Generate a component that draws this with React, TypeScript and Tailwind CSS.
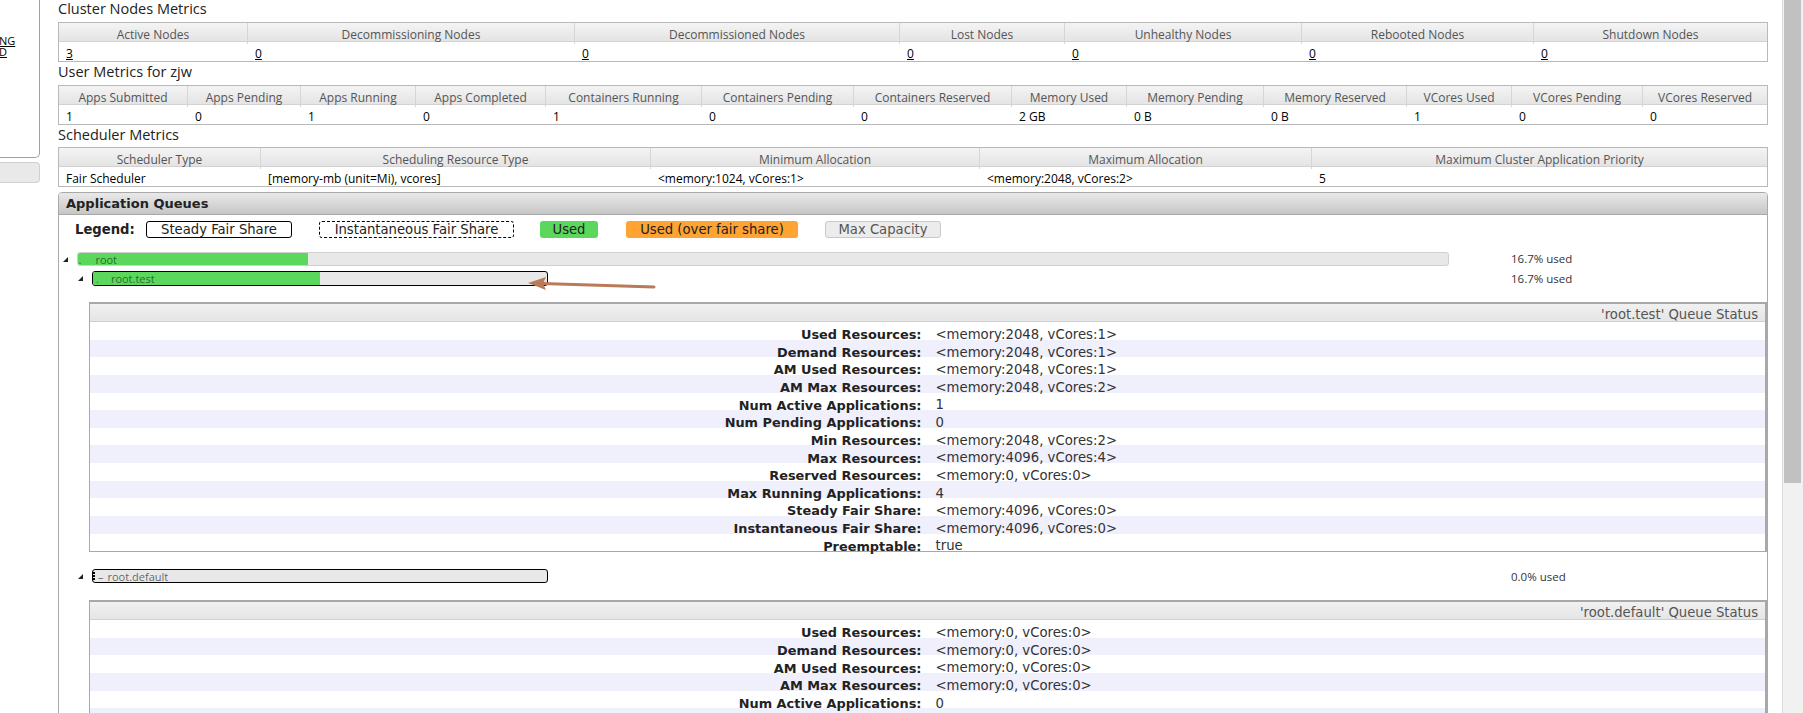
import React from "react";

const seg = "font-['Open_Sans','Noto_Sans',sans-serif]";
const dv = "font-['DejaVu_Sans','Verdana',sans-serif]";

type MetricProps = {
  grid: string;
  headers: string[];
  values: string[];
  underline?: boolean;
};

function MetricTable({ grid, headers, values, underline }: MetricProps) {
  return (
    <div className={`w-[1710px] border border-[#b9b9b9] ${seg}`}>
      <div className={`grid ${grid} h-[19px] bg-linear-to-b from-[#f4f4f4] to-[#e4e4e4] border-b border-[#d2d2d2]`}>
        {headers.map((h, i) => (
          <div
            key={i}
            className="flex items-center justify-center pt-[3px] text-[12px] text-[#555] border-r border-[#d6d6d6] last:border-r-0 whitespace-nowrap"
          >
            {h}
          </div>
        ))}
      </div>
      <div className={`grid ${grid} h-[19px] bg-white`}>
        {values.map((v, i) => (
          <div key={i} className="flex items-center pt-[3px] pl-[7px] text-[12px] text-black whitespace-nowrap">
            <span className={underline ? "underline" : ""}>{v}</span>
          </div>
        ))}
      </div>
    </div>
  );
}

function Title({ children, mt }: { children: React.ReactNode; mt: string }) {
  return (
    <div className={`${mt} h-[18px] flex items-center text-[14.5px] text-[#222] ${seg} whitespace-nowrap`}>
      {children}
    </div>
  );
}

function Tri() {
  return (
    <svg width="5" height="5" viewBox="0 0 5 5" className="shrink-0">
      <polygon points="5,0 5,5 0,5" fill="#222" />
    </svg>
  );
}

function StatusTable({ title, rows }: { title: string; rows: [string, string][] }) {
  return (
    <div className={`ml-[30px] border border-[#a8a8a8] border-t-2 border-r-2 ${dv}`}>
      <div className="h-[18px] flex items-center justify-end pt-[5px] pr-[7px] bg-linear-to-b from-[#f1f1f1] to-[#e5e5e5] border-b border-[#cfcfcf] text-[13.2px] text-[#555] whitespace-nowrap">
        {title}
      </div>
      {rows.map(([k, v], i) => (
        <div
          key={i}
          className={`flex items-center pt-[8px] h-[17.64px] ${i % 2 === 1 ? "bg-[#f0f0fc]" : "bg-white"}`}
        >
          <div className="w-1/2 text-right pr-[6px] text-[12.9px] font-bold text-[#222] whitespace-nowrap">{k}</div>
          <div className="pl-[8px] text-[13.25px] text-[#333] whitespace-nowrap">{v}</div>
        </div>
      ))}
    </div>
  );
}

const testRows: [string, string][] = [
  ["Used Resources:", "<memory:2048, vCores:1>"],
  ["Demand Resources:", "<memory:2048, vCores:1>"],
  ["AM Used Resources:", "<memory:2048, vCores:1>"],
  ["AM Max Resources:", "<memory:2048, vCores:2>"],
  ["Num Active Applications:", "1"],
  ["Num Pending Applications:", "0"],
  ["Min Resources:", "<memory:2048, vCores:2>"],
  ["Max Resources:", "<memory:4096, vCores:4>"],
  ["Reserved Resources:", "<memory:0, vCores:0>"],
  ["Max Running Applications:", "4"],
  ["Steady Fair Share:", "<memory:4096, vCores:0>"],
  ["Instantaneous Fair Share:", "<memory:4096, vCores:0>"],
  ["Preemptable:", "true"],
];

const defaultRows: [string, string][] = [
  ["Used Resources:", "<memory:0, vCores:0>"],
  ["Demand Resources:", "<memory:0, vCores:0>"],
  ["AM Used Resources:", "<memory:0, vCores:0>"],
  ["AM Max Resources:", "<memory:0, vCores:0>"],
  ["Num Active Applications:", "0"],
  ["Num Pending Applications:", "0"],
];

export default function App() {
  return (
    <div className="relative w-[1803px] h-[713px] overflow-hidden bg-white flex">
      {/* Left sidebar (partially scrolled out) */}
      <aside className={`w-[40px] shrink-0 ${seg}`}>
        <div className="h-[158px] border-r border-b border-[#a0a0a0] rounded-br-[5px] pt-[36px] text-[11px] leading-[10.5px] text-black">
          <div className="underline -ml-[1px]">NG</div>
          <div className="underline -ml-[1px]">D</div>
        </div>
        <div className="mt-[4px] h-[21px] bg-[#e9e9e9] border border-l-0 border-[#d0d0d0] rounded-r-[4px]" />
      </aside>

      {/* Main content */}
      <main className="ml-[18px] w-[1710px] shrink-0">
        <Title mt="mt-0">Cluster Nodes Metrics</Title>
        <div className="mt-[4px]">
          <MetricTable
            grid="grid-cols-[189px_327px_325px_165px_237px_232px_233px]"
            headers={[
              "Active Nodes",
              "Decommissioning Nodes",
              "Decommissioned Nodes",
              "Lost Nodes",
              "Unhealthy Nodes",
              "Rebooted Nodes",
              "Shutdown Nodes",
            ]}
            values={["3", "0", "0", "0", "0", "0", "0"]}
            underline
          />
        </div>

        <Title mt="mt-[1px]">User Metrics for zjw</Title>
        <div className="mt-[4px]">
          <MetricTable
            grid="grid-cols-[129px_113px_115px_130px_156px_152px_158px_115px_137px_143px_105px_131px_124px]"
            headers={[
              "Apps Submitted",
              "Apps Pending",
              "Apps Running",
              "Apps Completed",
              "Containers Running",
              "Containers Pending",
              "Containers Reserved",
              "Memory Used",
              "Memory Pending",
              "Memory Reserved",
              "VCores Used",
              "VCores Pending",
              "VCores Reserved",
            ]}
            values={["1", "0", "1", "0", "1", "0", "0", "2 GB", "0 B", "0 B", "1", "0", "0"]}
          />
        </div>

        <Title mt="mt-[1px]">Scheduler Metrics</Title>
        <div className="mt-[3px]">
          <MetricTable
            grid="grid-cols-[202px_390px_329px_332px_455px]"
            headers={[
              "Scheduler Type",
              "Scheduling Resource Type",
              "Minimum Allocation",
              "Maximum Allocation",
              "Maximum Cluster Application Priority",
            ]}
            values={[
              "Fair Scheduler",
              "[memory-mb (unit=Mi), vcores]",
              "<memory:1024, vCores:1>",
              "<memory:2048, vCores:2>",
              "5",
            ]}
          />
        </div>

        {/* Application Queues panel */}
        <div className="mt-[5px] w-[1710px] border border-[#a9a9a9] rounded-t-[4px] h-[600px]">
          <div className={`h-[22px] flex items-center pt-[1px] pl-[7px] bg-linear-to-b from-[#e9e9e9] to-[#c6c6c6] border-b border-[#a8a8a8] rounded-t-[3px] text-[13px] font-bold text-[#222] ${dv}`}>
            Application Queues
          </div>

          <div className="pt-[6px]">
            {/* Legend */}
            <div className={`flex items-center h-[17px] text-[13.2px] ${dv}`}>
              <div className="w-[87px] pl-[16px] font-bold text-[#222]">Legend:</div>
              <div className="w-[146px] h-[17px] flex items-center justify-center border border-black rounded-[3px] text-[#222]">
                Steady Fair Share
              </div>
              <div className="ml-[27px] w-[195px] h-[17px] flex items-center justify-center border border-dashed border-black rounded-[3px] text-[#222]">
                Instantaneous Fair Share
              </div>
              <div className="ml-[26px] w-[58px] h-[17px] flex items-center justify-center bg-[#5bd75b] rounded-[3px] text-[#222]">
                Used
              </div>
              <div className="ml-[28px] w-[172px] h-[17px] flex items-center justify-center bg-[#ffa333] rounded-[3px] text-[#222] whitespace-nowrap">
                Used (over fair share)
              </div>
              <div className="ml-[27px] w-[116px] h-[17px] flex items-center justify-center bg-[#ececec] border border-[#c9c9c9] rounded-[3px] text-[#555]">
                Max Capacity
              </div>
            </div>

            {/* root */}
            <div className={`mt-[14px] flex items-center h-[14px] ${seg}`}>
              <div className="w-[1452px] flex items-center pl-[4px]">
                <Tri />
                <div className="ml-[8.5px] relative w-[1372px] h-[14px] bg-[#e8e8e8] border border-[#d0d0d0] rounded-[3px] overflow-hidden">
                  <div className="absolute left-0 top-0 bottom-0 w-[230px] bg-[#5bd75b]" />
                  <div className="relative flex items-center h-full text-[11px] text-black/55 leading-none">
                    <span className="ml-[1px]">.</span>
                    <span className="ml-[14px]">root</span>
                  </div>
                </div>
              </div>
              <div className="text-[11.5px] text-[#333] whitespace-nowrap">16.7% used</div>
            </div>

            {/* root.test */}
            <div className={`mt-[5px] flex items-center h-[15px] ${seg}`}>
              <div className="w-[1452px] flex items-center pl-[19px]">
                <Tri />
                <div className="ml-[9px] relative w-[456px] h-[15px] bg-[#e8e8e8] border border-black rounded-[3px] overflow-hidden">
                  <div className="absolute left-0 top-0 bottom-0 w-[227px] bg-[#5bd75b]" />
                  <div className="relative flex items-center h-full text-[11px] text-black/55 leading-none">
                    <span className="ml-[3px]">.</span>
                    <span className="ml-[12px]">root.test</span>
                  </div>
                </div>
              </div>
              <div className="text-[11.5px] text-[#333] whitespace-nowrap">16.7% used</div>
            </div>

            <div className="mt-[16px]">
              <StatusTable title="'root.test' Queue Status" rows={testRows} />
            </div>

            {/* root.default */}
            <div className={`mt-[17px] flex items-center h-[14px] ${seg}`}>
              <div className="w-[1452px] flex items-center pl-[19px]">
                <Tri />
                <div className="ml-[9px] w-[456px] h-[14px] bg-[#e8e8e8] border border-black rounded-[3px] flex items-center text-[11px] text-black/60 leading-none">
                  <span className="h-[8px] border-l-2 border-dotted border-black" />
                  <span className="ml-[3px]">–</span>
                  <span className="ml-[4px]">root.default</span>
                </div>
              </div>
              <div className="text-[11.5px] text-[#333] whitespace-nowrap">0.0% used</div>
            </div>

            <div className="mt-[17px]">
              <StatusTable title="'root.default' Queue Status" rows={defaultRows} />
            </div>
          </div>
        </div>
      </main>

      {/* Browser scrollbar */}
      <div className="ml-[14px] w-[21px] shrink-0 h-[713px] bg-[#f1f1f1] border-l border-[#dcdcdc] pl-[1px]">
        <div className="w-[17px] h-[483px] bg-[#c1c1c1]" />
      </div>

      {/* Annotation arrow */}
      <svg
        className="absolute left-0 top-0 pointer-events-none"
        width="1803"
        height="713"
        viewBox="0 0 1803 713"
      >
        <line x1="654" y1="287" x2="534" y2="283.3" stroke="#b87a58" strokeWidth="3" strokeLinecap="round" />
        <polygon points="528,283 546,277 543,283.4 546,290" fill="#b87a58" />
      </svg>
    </div>
  );
}
